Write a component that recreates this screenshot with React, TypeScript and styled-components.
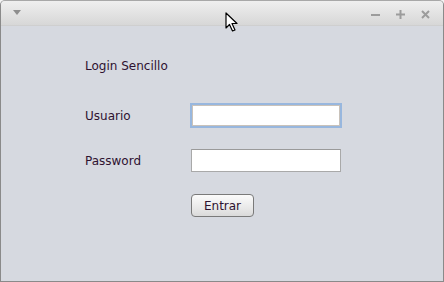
import styled, { createGlobalStyle } from 'styled-components';

const GlobalStyle = createGlobalStyle`
  html, body {
    margin: 0;
    padding: 0;
    background: #f4f4f4;
  }
`;

const Window = styled.div`
  position: relative;
  width: 444px;
  height: 282px;
  box-sizing: border-box;
  border: 1px solid #8a8a8a;
  border-top-color: #a8a8a8;
  border-radius: 5px 5px 0 0;
  background: #d6d9e0;
  overflow: hidden;
  font-family: "DejaVu Sans", sans-serif;
  font-size: 12px;
  color: #2e1230;
`;

const TitleBar = styled.div`
  display: flex;
  align-items: center;
  height: 25px;
  padding: 0 13px 0 12px;
  box-sizing: border-box;
  background: linear-gradient(#efefef, #d7d7d7);
  border-bottom: 1px solid #cfcfcf;
`;

const MenuArrow = styled.div`
  width: 0;
  height: 0;
  border-left: 4px solid transparent;
  border-right: 4px solid transparent;
  border-top: 5px solid #8e8e8e;
  margin-top: -2px;
`;

const Spacer = styled.div`
  flex: 1;
`;

const Controls = styled.div`
  display: flex;
  gap: 16px;
  align-items: center;
  margin-top: 2px;
`;

const CtrlIcon = styled.svg`
  width: 9px;
  height: 9px;
  display: block;
`;

const Cursor = styled.svg`
  position: absolute;
  left: 224px;
  top: 11px;
  width: 14px;
  height: 20px;
`;

const Content = styled.div`
  display: grid;
  grid-template-columns: 106px 150px;
  row-gap: 22px;
  align-items: center;
  padding: 32px 0 0 84px;
`;

const Title = styled.div`
  grid-column: 1 / -1;
  line-height: 16px;
  margin-bottom: 8px;
`;

const Label = styled.div`
  line-height: 16px;
`;

const Field = styled.input<{ $focused?: boolean }>`
  box-sizing: border-box;
  width: ${p => (p.$focused ? '152px' : '150px')};
  height: ${p => (p.$focused ? '25px' : '23px')};
  margin: ${p => (p.$focused ? '-1px 0 -1px -1px' : '0')};
  background: #ffffff;
  border: ${p => (p.$focused ? '2px solid #98b7de' : '1px solid #a9a9a9')};
  border-top-color: ${p => (p.$focused ? '#98b7de' : '#9a9a9a')};
  box-shadow: ${p => (p.$focused ? 'inset 0 0 0 1px #c9c2ba' : 'none')};
  outline: none;
  padding: 0 4px;
  font: inherit;
`;

const ButtonCell = styled.div`
  grid-column: 2;
`;

const Button = styled.button`
  box-sizing: border-box;
  width: 63px;
  height: 23px;
  border: 1px solid #7a7a7a;
  border-radius: 4px;
  background: linear-gradient(#fbfbfb, #e9e9e9 60%, #dadada);
  font: inherit;
  color: #2e1230;
  padding: 0;
  line-height: 20px;
`;

export default function App() {
  return (
    <>
      <GlobalStyle />
      <Window>
        <TitleBar>
          <MenuArrow />
          <Spacer />
          <Controls>
            <CtrlIcon viewBox="0 0 9 9">
              <rect x="0" y="4" width="9" height="2" fill="#9c9c9c" />
            </CtrlIcon>
            <CtrlIcon viewBox="0 0 9 9">
              <rect x="0" y="3.5" width="9" height="2" fill="#9c9c9c" />
              <rect x="3.5" y="0" width="2" height="9" fill="#9c9c9c" />
            </CtrlIcon>
            <CtrlIcon viewBox="0 0 9 9">
              <path d="M1 1 L8 8 M8 1 L1 8" stroke="#9c9c9c" strokeWidth="2" />
            </CtrlIcon>
          </Controls>
        </TitleBar>
        <Content>
          <Title>Login Sencillo</Title>
          <Label>Usuario</Label>
          <Field $focused />
          <Label>Password</Label>
          <Field type="password" />
          <ButtonCell>
            <Button>Entrar</Button>
          </ButtonCell>
        </Content>
        <Cursor viewBox="0 0 14 20">
          <path
            d="M1 1 L1 16 L4.5 12.5 L7.5 19 L10 18 L7 11.5 L12 11.5 Z"
            fill="#ffffff"
            stroke="#000000"
            strokeWidth="1.2"
            strokeLinejoin="round"
          />
        </Cursor>
      </Window>
    </>
  );
}
